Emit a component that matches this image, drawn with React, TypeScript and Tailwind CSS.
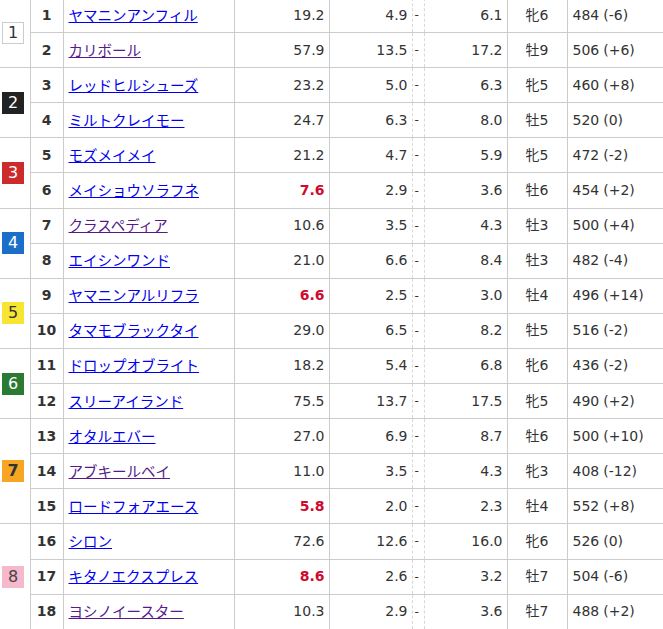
import React from 'react'

type Horse = {
  no: number
  name: string
  visited?: boolean
  odds: string
  hot?: boolean
  low: string
  high: string
  sex: string
  weight: string
  diff: string
}

const horses: Horse[] = [
  { no: 1, name: 'ヤマニンアンフィル', odds: '19.2', low: '4.9', high: '6.1', sex: '牝6', weight: '484', diff: '(-6)' },
  { no: 2, name: 'カリボール', visited: true, odds: '57.9', low: '13.5', high: '17.2', sex: '牡9', weight: '506', diff: '(+6)' },
  { no: 3, name: 'レッドヒルシューズ', odds: '23.2', low: '5.0', high: '6.3', sex: '牝5', weight: '460', diff: '(+8)' },
  { no: 4, name: 'ミルトクレイモー', odds: '24.7', low: '6.3', high: '8.0', sex: '牡5', weight: '520', diff: '(0)' },
  { no: 5, name: 'モズメイメイ', odds: '21.2', low: '4.7', high: '5.9', sex: '牝5', weight: '472', diff: '(-2)' },
  { no: 6, name: 'メイショウソラフネ', odds: '7.6', hot: true, low: '2.9', high: '3.6', sex: '牡6', weight: '454', diff: '(+2)' },
  { no: 7, name: 'クラスペディア', visited: true, odds: '10.6', low: '3.5', high: '4.3', sex: '牡3', weight: '500', diff: '(+4)' },
  { no: 8, name: 'エイシンワンド', odds: '21.0', low: '6.6', high: '8.4', sex: '牡3', weight: '482', diff: '(-4)' },
  { no: 9, name: 'ヤマニンアルリフラ', odds: '6.6', hot: true, low: '2.5', high: '3.0', sex: '牡4', weight: '496', diff: '(+14)' },
  { no: 10, name: 'タマモブラックタイ', odds: '29.0', low: '6.5', high: '8.2', sex: '牡5', weight: '516', diff: '(-2)' },
  { no: 11, name: 'ドロップオブライト', odds: '18.2', low: '5.4', high: '6.8', sex: '牝6', weight: '436', diff: '(-2)' },
  { no: 12, name: 'スリーアイランド', odds: '75.5', low: '13.7', high: '17.5', sex: '牝5', weight: '490', diff: '(+2)' },
  { no: 13, name: 'オタルエバー', odds: '27.0', low: '6.9', high: '8.7', sex: '牡6', weight: '500', diff: '(+10)' },
  { no: 14, name: 'アブキールベイ', visited: true, odds: '11.0', low: '3.5', high: '4.3', sex: '牝3', weight: '408', diff: '(-12)' },
  { no: 15, name: 'ロードフォアエース', odds: '5.8', hot: true, low: '2.0', high: '2.3', sex: '牡4', weight: '552', diff: '(+8)' },
  { no: 16, name: 'シロン', odds: '72.6', low: '12.6', high: '16.0', sex: '牝6', weight: '526', diff: '(0)' },
  { no: 17, name: 'キタノエクスプレス', odds: '8.6', hot: true, low: '2.6', high: '3.2', sex: '牡7', weight: '504', diff: '(-6)' },
  { no: 18, name: 'ヨシノイースター', visited: true, odds: '10.3', low: '2.9', high: '3.6', sex: '牡7', weight: '488', diff: '(+2)' },
]

// waku: first horse number, span, badge style
const waku: Record<number, { n: number; span: number; cls: string }> = {
  1: { n: 1, span: 2, cls: 'bg-white text-[#333] border border-[#ccc]' },
  3: { n: 2, span: 2, cls: 'bg-[#222] text-white' },
  5: { n: 3, span: 2, cls: 'bg-[#cc2b2b] text-white' },
  7: { n: 4, span: 2, cls: 'bg-[#1c6fc8] text-white' },
  9: { n: 5, span: 2, cls: 'bg-[#f8e433] text-[#333]' },
  11: { n: 6, span: 2, cls: 'bg-[#2b7a34] text-white' },
  13: { n: 7, span: 3, cls: 'bg-[#f6a623] text-[#333] font-bold' },
  16: { n: 8, span: 3, cls: 'bg-[#f6b8cb] text-[#444]' },
}

export default function App() {
  return (
    <div className="w-[663px] h-[629px] overflow-hidden bg-white">
      <table
        className="-mt-[3px] w-[663px] table-fixed border-collapse text-[14px] text-[#333]"
        style={{ fontFamily: '"DejaVu Sans", "Noto Sans CJK JP", sans-serif' }}
      >
        <colgroup>
          <col className="w-[30px]" />
          <col className="w-[33px]" />
          <col className="w-[171px]" />
          <col className="w-[95px]" />
          <col className="w-[83px]" />
          <col className="w-[12px]" />
          <col className="w-[83px]" />
          <col className="w-[60px]" />
          <col className="w-[96px]" />
        </colgroup>
        <tbody>
          {horses.map((h) => {
            const w = waku[h.no]
            return (
              <tr key={h.no} className="h-[35.1px]">
                {w && (
                  <td rowSpan={w.span} className="border-t border-r border-[#ccc] p-0 pl-[2px] align-middle">
                    <span className={`flex h-[22px] w-[22px] items-center justify-center text-[16px] leading-none ${w.cls}`}>
                      {w.n}
                    </span>
                  </td>
                )}
                <td className="border-t border-r border-[#ccc] p-0 text-center font-bold">{h.no}</td>
                <td className="border-t border-r border-[#ccc] p-0 pl-[5px]">
                  <a
                    href="#"
                    className={`text-[14.5px] underline ${h.visited ? 'text-[#551a8b]' : 'text-[#0000ee]'}`}
                    style={{ fontFamily: '"Noto Sans CJK JP", sans-serif' }}
                  >
                    {h.name}
                  </a>
                </td>
                <td className={`border-t border-r border-[#ccc] p-0 pr-[4px] text-right ${h.hot ? 'font-bold text-[#d00a2e]' : ''}`}>
                  {h.odds}
                </td>
                <td className="border-t border-r border-t-[#ccc] border-r-[#d8d8d8] [border-right-style:dashed] p-0 pr-[4px] text-right">
                  {h.low}
                </td>
                <td className="border-t border-r border-t-[#ccc] border-r-[#d8d8d8] [border-right-style:dashed] p-0 pl-[2px] text-[12px]">-</td>
                <td className="border-t border-r border-[#ccc] p-0 pr-[4px] text-right">{h.high}</td>
                <td className="border-t border-r border-[#ccc] p-0 text-center">{h.sex}</td>
                <td className="border-t border-[#ccc] p-0 pl-[5px]">
                  {h.weight}
                  <span className="ml-[4px]">{h.diff}</span>
                </td>
              </tr>
            )
          })}
        </tbody>
      </table>
    </div>
  )
}
